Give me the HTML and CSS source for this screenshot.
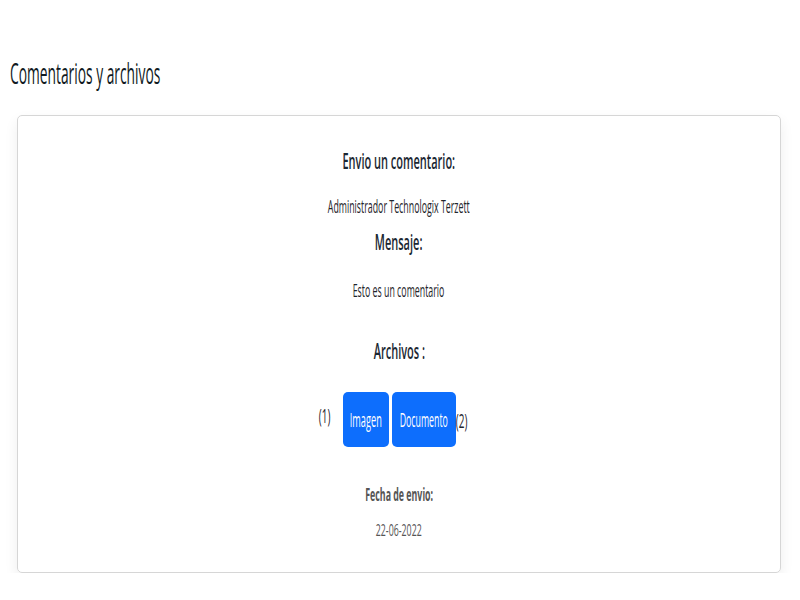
FILE: index.html
```html
<!DOCTYPE html>
<html lang="es">
<head>
<meta charset="utf-8">
<title>Comentarios y archivos</title>
<link rel="stylesheet" href="styles.css">
</head>
<body>
<div class="page">
  <h2 class="title"><span class="sq sq-left">Comentarios y archivos</span></h2>
  <div class="card">
    <h5 class="h-envio"><span class="sq">Envio un comentario:</span></h5>
    <p class="author"><span class="sq">Administrador Technologix Terzett</span></p>
    <h5 class="h-msg"><span class="sq">Mensaje:</span></h5>
    <p class="msg"><span class="sq">Esto es un comentario</span></p>
    <h5 class="h-files"><span class="sq">Archivos :</span></h5>
    <div class="files">
      <span class="count count-1"><span class="sq">(1)</span></span>
      <a class="btn btn-img"><span class="sq">Imagen</span></a>
      <a class="btn btn-doc"><span class="sq">Documento</span></a>
      <span class="count count-2"><span class="sq">(2)</span></span>
    </div>
    <p class="date-label"><span class="sq">Fecha de envio:</span></p>
    <p class="date"><span class="sq">22-06-2022</span></p>
  </div>
</div>
</body>
</html>
```
FILE: styles.css
```css
html, body {
  margin: 0;
  padding: 0;
  background: #fff;
}
body {
  font-family: "Open Sans", "Liberation Sans", sans-serif;
  color: #212529;
}
.page {
  padding: 55px 19px 0 0;
}
.sq {
  display: inline-block;
  white-space: nowrap;
  transform: scaleX(var(--s, 0.5));
  transform-origin: center;
}
.sq-left {
  transform-origin: left;
}
.title {
  --s: 0.46;
  margin: 0 0 0 10px;
  font-size: 30px;
  line-height: 35px;
  font-weight: 500;
  color: #111a22;
}
.card {
  margin: 25px 0 0 17px;
  height: 458px;
  box-sizing: border-box;
  border: 1px solid #d6d6d6;
  border-radius: 5px;
  box-shadow: 0 6px 14px rgba(0, 0, 0, 0.07);
  display: flex;
  flex-direction: column;
  align-items: center;
  padding-top: 31px;
}
.card > * {
  margin: 0;
  text-align: center;
}
.h-envio, .h-msg, .h-files {
  --s: 0.5;
  font-size: 22px;
  line-height: 26px;
  font-weight: 600;
  color: #1b2732;
}
.author {
  --s: 0.49;
  margin-top: 22px !important;
  font-size: 18px;
  line-height: 22px;
  color: #1f252b;
}
.h-msg {
  margin-top: 11px !important;
}
.msg {
  --s: 0.49;
  margin-top: 25px !important;
  font-size: 18px;
  line-height: 22px;
  color: #1f252b;
}
.h-files {
  margin-top: 36px !important;
}
.files {
  --s: 0.46;
  margin-top: 29px !important;
  display: flex;
  align-items: center;
  padding-right: 11px;
}
.count {
  --s: 0.5;
  width: 12px;
  display: flex;
  justify-content: center;
  font-size: 20px;
  line-height: 24px;
  color: #1f252b;
}
.count-1 {
  margin-right: 12px;
  margin-top: -8px;
}
.count-2 {
  margin-top: 2px;
}
.btn {
  height: 55px;
  background: #0d6efd;
  color: #fff;
  border-radius: 5px;
  display: flex;
  align-items: center;
  justify-content: center;
  font-size: 20px;
}
.btn-img {
  width: 46px;
  margin-right: 3px;
}
.btn-doc {
  --s: 0.44;
  width: 64px;
}
.date-label {
  --s: 0.49;
  margin-top: 37px !important;
  font-size: 18px;
  line-height: 20px;
  font-weight: 700;
  color: #555;
}
.date {
  --s: 0.55;
  margin-top: 16px !important;
  font-size: 16px;
  line-height: 20px;
  color: #555;
}
```
